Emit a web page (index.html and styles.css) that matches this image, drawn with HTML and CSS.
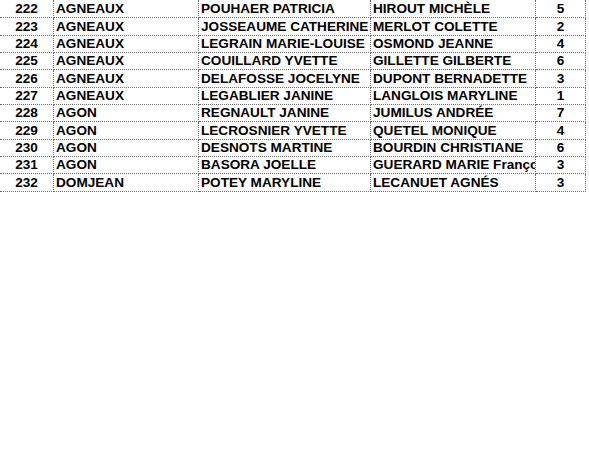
FILE: index.html
```html
<!DOCTYPE html>
<html>
<head>
<meta charset="utf-8">
<link rel="stylesheet" href="styles.css">
</head>
<body>
<div class="sheet">
  <div class="c num">222</div><div class="c">AGNEAUX</div><div class="c">POUHAER PATRICIA</div><div class="c">HIROUT MICHÈLE</div><div class="c num">5</div>
  <div class="c num">223</div><div class="c">AGNEAUX</div><div class="c">JOSSEAUME CATHERINE</div><div class="c">MERLOT COLETTE</div><div class="c num">2</div>
  <div class="c num">224</div><div class="c">AGNEAUX</div><div class="c">LEGRAIN MARIE-LOUISE</div><div class="c">OSMOND JEANNE</div><div class="c num">4</div>
  <div class="c num">225</div><div class="c">AGNEAUX</div><div class="c">COUILLARD YVETTE</div><div class="c">GILLETTE GILBERTE</div><div class="c num">6</div>
  <div class="c num">226</div><div class="c">AGNEAUX</div><div class="c">DELAFOSSE JOCELYNE</div><div class="c">DUPONT BERNADETTE</div><div class="c num">3</div>
  <div class="c num">227</div><div class="c">AGNEAUX</div><div class="c">LEGABLIER JANINE</div><div class="c">LANGLOIS MARYLINE</div><div class="c num">1</div>
  <div class="c num">228</div><div class="c">AGON</div><div class="c">REGNAULT JANINE</div><div class="c">JUMILUS ANDRÉE</div><div class="c num">7</div>
  <div class="c num">229</div><div class="c">AGON</div><div class="c">LECROSNIER YVETTE</div><div class="c">QUETEL MONIQUE</div><div class="c num">4</div>
  <div class="c num">230</div><div class="c">AGON</div><div class="c">DESNOTS MARTINE</div><div class="c">BOURDIN CHRISTIANE</div><div class="c num">6</div>
  <div class="c num">231</div><div class="c">AGON</div><div class="c">BASORA JOELLE</div><div class="c">GUERARD MARIE Françoise</div><div class="c num">3</div>
  <div class="c num">232</div><div class="c">DOMJEAN</div><div class="c">POTEY MARYLINE</div><div class="c">LECANUET AGNÉS</div><div class="c num">3</div>
</div>
</body>
</html>
```
FILE: styles.css
```css
html, body {
  margin: 0;
  padding: 0;
  background: #ffffff;
}
.sheet {
  display: grid;
  grid-template-columns: 54px 145px 172px 165px 50px;
  grid-template-rows: 18px 18px 17px 17px 18px 17px 17px 18px 17px 17px 18px;
  width: 586px;
  font-family: "Liberation Sans", Arial, sans-serif;
  font-weight: bold;
  font-size: 13.6px;
  color: #000000;
}
.c {
  box-sizing: border-box;
  border-right: 1px dotted #6e6e6e;
  border-bottom: 1px dotted #6e6e6e;
  padding-left: 2px;
  white-space: nowrap;
  overflow: hidden;
  display: flex;
  align-items: center;
  line-height: 1;
}
.num {
  justify-content: center;
  padding-left: 0;
}
```
